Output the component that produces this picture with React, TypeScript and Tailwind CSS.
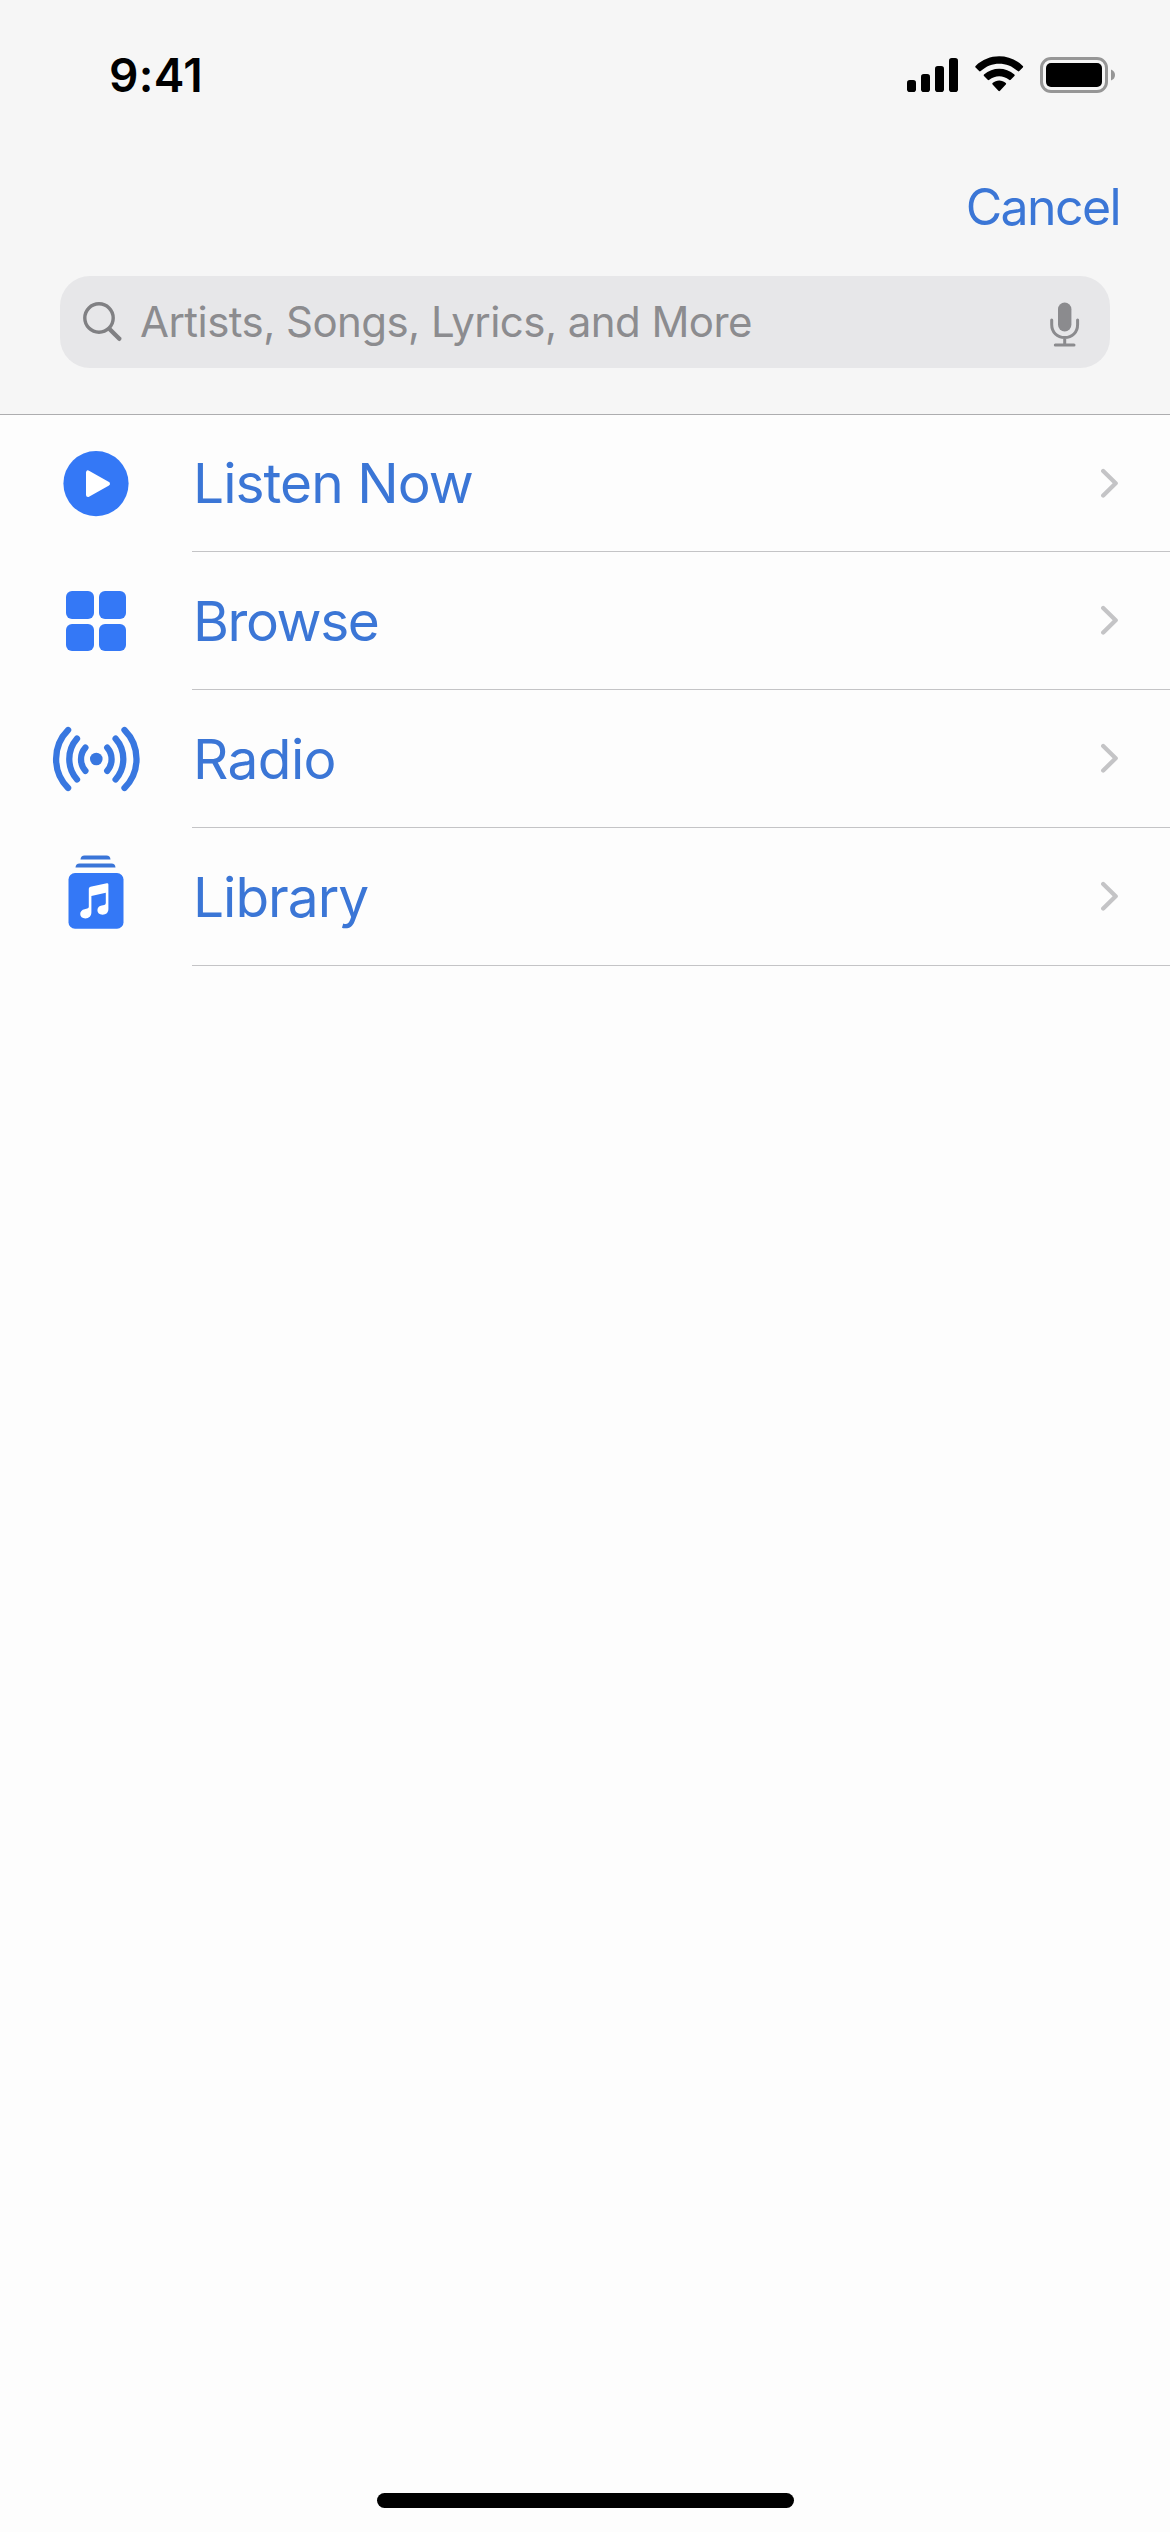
import type { ReactNode } from "react";

function StatusIcons() {
  return (
    <svg width="210" height="40" viewBox="0 0 210 40" fill="#000">
      <rect x="2" y="25" width="9" height="12" rx="2.8" />
      <rect x="16" y="19" width="9" height="18" rx="2.8" />
      <rect x="30" y="11" width="9" height="26" rx="2.8" />
      <rect x="44" y="3" width="9" height="34" rx="2.8" />
      <path d="M70.6 10.9C84 -1.9 104.4 -1.9 117.8 10.9Q118.6 11.7 117.8 12.5L114.3 16Q113.5 16.8 112.7 16C102 6.2 86.4 6.2 75.7 16Q74.9 16.8 74.1 16L70.6 12.5Q69.8 11.7 70.6 10.9Z" />
      <path d="M79 19.5C87.8 11.8 100.6 11.8 109.4 19.5Q110.2 20.3 109.4 21.1L105.7 24.8Q104.9 25.5 104.1 24.8C98.2 19.9 90.2 19.9 84.3 24.8Q83.5 25.5 82.7 24.8L79 21.1Q78.2 20.3 79 19.5Z" />
      <path d="M87.6 28C91.2 24.6 97.2 24.6 100.8 28Q101.6 28.8 100.8 29.6L95 35.8Q94.2 36.6 93.4 35.8L87.6 29.6Q86.8 28.8 87.6 28Z" />
      <rect x="136.5" y="3.5" width="65" height="33" rx="9.5" fill="none" stroke="#969696" strokeWidth="3" />
      <rect x="141" y="8" width="56" height="24" rx="5" />
      <path d="M206 14.5Q210 16 210 20T206 25.5Z" fill="#969696" />
    </svg>
  );
}

function SearchIcon() {
  return (
    <svg width="40" height="41" viewBox="0 0 40 41" fill="none" stroke="#808083" strokeLinecap="round">
      <circle cx="16" cy="16" r="14.2" strokeWidth="3.4" />
      <path d="M27 27.5L36.3 36.8" strokeWidth="4.4" />
    </svg>
  );
}

function MicIcon() {
  return (
    <svg width="30" height="45" viewBox="0 0 30 45" fill="none" stroke="#8b8b8e" strokeWidth="3" strokeLinecap="round" className="mt-1">
      <rect x="8" y="0.5" width="13.4" height="29" rx="6.7" fill="#8b8b8e" stroke="none" />
      <path d="M1.7 18V22.5C1.7 30.5 7.3 35.6 14.7 35.6S27.6 30.5 27.6 22.5V18M14.7 36V43M5.3 43H24" />
    </svg>
  );
}

function PlayIcon() {
  return (
    <svg width="66" height="66" viewBox="0 0 66 66">
      <circle cx="33" cy="32.6" r="32.6" fill="#3478f6" />
      <path d="M25 21.4V44L45 32.7Z" fill="#fff" stroke="#fff" strokeWidth="4" strokeLinejoin="round" />
    </svg>
  );
}

function GridIcon() {
  return (
    <div className="grid grid-cols-2 gap-[5px]">
      <div className="size-[27.5px] rounded-[6px] bg-[#3478f6]" />
      <div className="size-[27.5px] rounded-[6px] bg-[#3478f6]" />
      <div className="size-[27.5px] rounded-[6px] bg-[#3478f6]" />
      <div className="size-[27.5px] rounded-[6px] bg-[#3478f6]" />
    </div>
  );
}

function RadioIcon() {
  return (
    <svg width="88" height="66" viewBox="12.5 25 88 66" fill="none" stroke="#3877e0" strokeWidth="6.3" strokeLinecap="round">
      <circle cx="56.8" cy="58" r="6.3" fill="#3877e0" stroke="none" />
      <path d="M28.6 29A41 41 0 0 0 28.6 87M37.5 37.7A30.8 30.8 0 0 0 37.5 78.5M45.9 46.6A17.5 17.5 0 0 0 45.9 69.8" />
      <path d="M85 29A41 41 0 0 1 85 87M76.1 37.7A30.8 30.8 0 0 1 76.1 78.5M67.7 46.6A17.5 17.5 0 0 1 67.7 69.8" />
    </svg>
  );
}

function LibraryIcon() {
  return (
    <svg width="56" height="74" viewBox="27.5 24.5 56 74" className="mb-[10px]">
      <path d="M40 29Q40.3 25 44 25H66Q69.7 25 70 29Z" fill="#3a75d8" />
      <path d="M35 37Q35.3 33 39 33H71Q74.7 33 75 37Z" fill="#3a75d8" />
      <rect x="28" y="42.6" width="55" height="55.6" rx="6.5" fill="#3478f6" />
      <path
        d="M48.3 58.3Q48.3 56.6 50 56.2L66.3 52.7Q67.9 52.4 67.9 54V78.5C67.9 82 65.8 84.2 62 84.2C58.8 84.2 56.9 82.3 56.9 79.8C56.9 77.3 58.7 75.6 61.3 75.1L63.8 74.5Q65.3 74.2 65.3 72.5V62.3L50.9 65.4V81.8C50.9 85.4 48.7 87.9 44.8 87.9C41.7 87.9 39.7 86 39.7 83.5C39.7 81 41.5 79.2 44.1 78.7L46.7 78.1Q48.3 77.8 48.3 76.2Z"
        fill="#fff"
      />
    </svg>
  );
}

function Chevron() {
  return (
    <svg width="19" height="31" viewBox="0 0 19 31" fill="none" stroke="#c4c4c6" strokeWidth="4.3" strokeLinecap="round" strokeLinejoin="round">
      <path d="M3.2 3L15.7 15.2L3.2 27.5" />
    </svg>
  );
}

function Row({ icon, label, first = false }: { icon: ReactNode; label: ReactNode; first?: boolean }) {
  return (
    <li className={first ? "flex h-[137px]" : "flex h-[138px]"}>
      <div className="flex w-48 shrink-0 items-center justify-center">{icon}</div>
      <div className="flex flex-1 items-center justify-between border-b border-[#c4c4c6] pr-[51px]">
        <span className="whitespace-nowrap pl-px text-[55px] leading-[70px] text-[#3b76d6]">{label}</span>
        <Chevron />
      </div>
    </li>
  );
}

export default function App() {
  return (
    <div className="flex h-[2532px] w-[1170px] flex-col bg-[#fdfdfd] font-['Inter',sans-serif]">
      <header className="flex h-[415px] flex-col border-b border-[#adadaf] bg-[#f6f6f6]">
        <div className="flex h-[149px] items-center justify-between pl-[109px] pr-[55px]">
          <span className="text-[46px] font-semibold leading-[56px] tracking-[0.3px]">9:41</span>
          <StatusIcons />
        </div>
        <div className="flex h-[127px] justify-end pr-[50px] pt-[26px]">
          <button className="h-16 text-[50px] leading-[64px] tracking-[-1.6px] text-[#3b76d6]">Cancel</button>
        </div>
        <div className="mx-[60px] flex h-[92px] items-center rounded-[30px] bg-[#e7e7e9] pl-[23px] pr-[30px]">
          <SearchIcon />
          <span className="ml-[17px] flex-1 whitespace-nowrap text-[42px] leading-[60px] tracking-[-0.55px] text-[#8c8c8f]">
            Artists, Songs, Lyrics, and More
          </span>
          <MicIcon />
        </div>
      </header>
      <ul className="flex flex-col">
        <Row first icon={<PlayIcon />} label={<span className="tracking-[-0.95px]">Listen Now</span>} />
        <Row icon={<GridIcon />} label={<span className="tracking-[-1.4px]">Browse</span>} />
        <Row icon={<RadioIcon />} label={<span className="tracking-[-0.6px]">Radio</span>} />
        <Row icon={<LibraryIcon />} label={<span className="tracking-[-1px]">Library</span>} />
      </ul>
      <div className="mb-6 mt-auto flex justify-center">
        <div className="h-[15px] w-[417px] rounded-full bg-black" />
      </div>
    </div>
  );
}
